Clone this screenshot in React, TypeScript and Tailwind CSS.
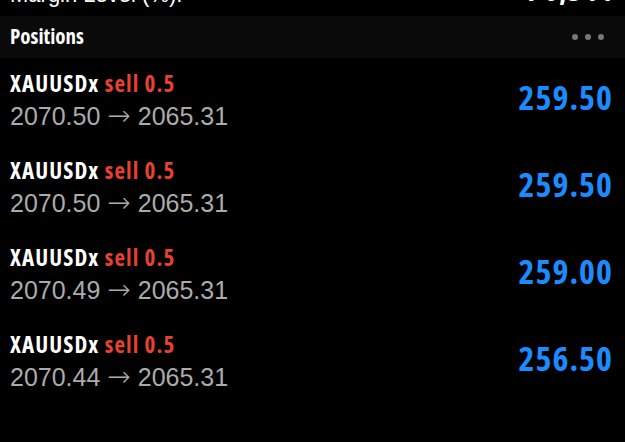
const positions = [
  { symbol: "XAUUSDx", side: "sell", volume: "0.5", open: "2070.50", current: "2065.31", profit: "259.50" },
  { symbol: "XAUUSDx", side: "sell", volume: "0.5", open: "2070.50", current: "2065.31", profit: "259.50" },
  { symbol: "XAUUSDx", side: "sell", volume: "0.5", open: "2070.49", current: "2065.31", profit: "259.00" },
  { symbol: "XAUUSDx", side: "sell", volume: "0.5", open: "2070.44", current: "2065.31", profit: "256.50" },
];

// condensed bold face for titles and P/L
const narrow = "font-['Open_Sans','DejaVu_Sans',sans-serif] font-bold font-stretch-condensed";

export default function App() {
  return (
    <div className="h-[442px] w-[625px] overflow-hidden bg-black font-['Liberation_Sans',Arial,sans-serif]">
      {/* cut-off summary row */}
      <div className="flex h-4 items-start justify-between overflow-hidden pl-[10px] pr-[12px]">
        <span className="-mt-[16px] text-[22px] leading-none text-white">Margin Level (%):</span>
        <span className={`${narrow} -mt-[25px] text-[30px] leading-none tracking-[1px] text-white`}>1 6,344</span>
      </div>

      {/* header */}
      <div className="flex h-[42px] items-center justify-between bg-[#0a0a0a] pl-[10px] pr-[21px]">
        <span className={`${narrow} text-[21px] text-white`}>Positions</span>
        <div className="flex gap-[7px]">
          <span className="h-[6px] w-[6px] rounded-full bg-[#777]" />
          <span className="h-[6px] w-[6px] rounded-full bg-[#777]" />
          <span className="h-[6px] w-[6px] rounded-full bg-[#777]" />
        </div>
      </div>

      {positions.map((p, i) => (
        <div key={i} className="flex h-[87px] items-center justify-between pl-[10px] pr-[12px]">
          <div className="-mt-[4px] flex flex-col">
            <div className={`${narrow} text-[23px] leading-[28px] tracking-[1.1px]`}>
              <span className="text-white">{p.symbol}</span>{" "}
              <span className="text-[#e8412f]">
                {p.side} {p.volume}
              </span>
            </div>
            <div className="mt-[5px] text-[25px] leading-[28px] text-[#ababab]">
              {p.open}{" "}
              <span className="font-['DejaVu_Sans',sans-serif] text-[28px] font-extralight">→</span>{" "}
              {p.current}
            </div>
          </div>
          <div className={`${narrow} -mt-[10px] text-[34px] leading-none tracking-[1px] text-[#1a8cff]`}>{p.profit}</div>
        </div>
      ))}
    </div>
  );
}
